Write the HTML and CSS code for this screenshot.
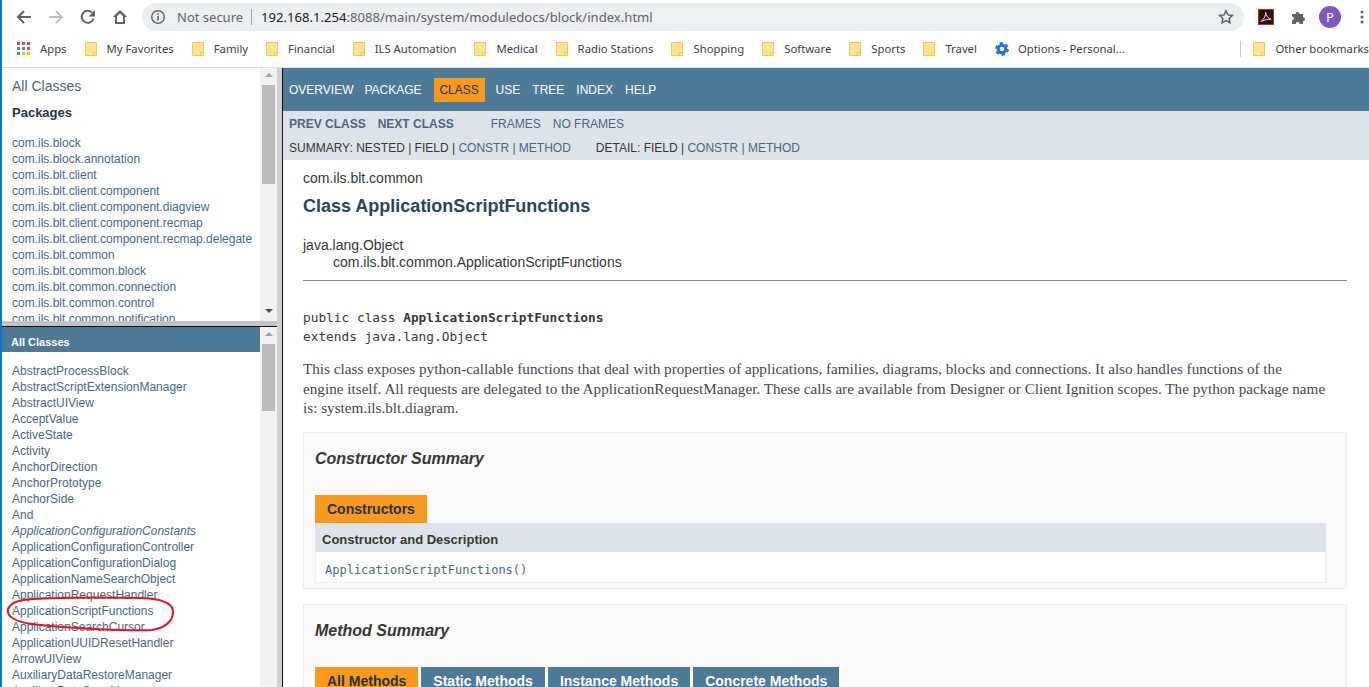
FILE: index.html
```html
<!DOCTYPE html>
<html lang="en">
<head>
<meta charset="utf-8">
<title>ApplicationScriptFunctions</title>
<link rel="stylesheet" href="styles.css">
</head>
<body>
<svg width="0" height="0" class="defs"><defs>
<symbol id="folder" viewBox="0 0 12 14"><path d="M.5.5h11v13H.5z" fill="#fee48e" stroke="#f2c94c"/><path d="M8.5 13.500v-3h3" fill="#fff3c4" stroke="#f2c94c"/></symbol>
</defs></svg>
<div class="window">
  <header class="toolbar">
    <svg class="tb-icon" width="16" height="16" viewBox="0 0 16 16"><path d="M15 8H2M8 2 2 8l6 6" fill="none" stroke="#5f6368" stroke-width="2"/></svg>
    <svg class="tb-icon" width="16" height="16" viewBox="0 0 16 16"><path d="M1 8h13M8 2l6 6-6 6" fill="none" stroke="#bdc1c6" stroke-width="2"/></svg>
    <svg class="tb-icon" width="16" height="16" viewBox="0 0 16 16"><path d="M13.500 9.500A6 6 0 1 1 12 3.600" fill="none" stroke="#5f6368" stroke-width="2"/><path d="M15 1v6.500H8.500z" fill="#5f6368"/></svg>
    <svg class="tb-icon" width="16" height="16" viewBox="0 0 16 16"><path d="M8 1 .8 8H3v7h10V8h2.200zM5 13V7.300l3-3 3 3V13z" fill="#5f6368"/></svg>
    <div class="omnibox">
      <svg width="16" height="16" viewBox="0 0 16 16"><circle cx="8" cy="8" r="6.300" fill="none" stroke="#5f6368" stroke-width="1.400"/><path d="M7.200 7h1.600v4.500H7.200zM7.200 4.300h1.600v1.600H7.200z" fill="#5f6368"/></svg>
      <span class="not-secure">Not secure</span>
      <span class="omni-sep"></span>
      <span class="url"><b>192.168.1.254</b>:8088/main/system/moduledocs/block/index.html</span>
      <svg class="star" width="16" height="16" viewBox="0 0 16 16"><path d="m8 1.800 1.900 4.100 4.500.5-3.300 3 .9 4.400L8 11.600l-4 2.200.9-4.400-3.300-3 4.500-.5z" fill="none" stroke="#5f6368" stroke-width="1.500"/></svg>
    </div>
    <svg class="ext-pdf" width="16" height="16" viewBox="0 0 16 16"><rect x=".5" y=".5" width="15" height="15" fill="#2b1010" stroke="#c5281c"/><path d="M3 12.500C6 10 8 6.500 7.600 3.500c1 3.500 2.500 6 5.500 6.800-3-.3-6 .3-10.100 2.200z" fill="none" stroke="#f3d9d5" stroke-width="1"/></svg>
    <svg class="ext-puzzle" width="16" height="16" viewBox="0 0 16 16"><path d="M1 5h3.500a2 2 0 1 1 4 0H12v3.300a2 2 0 1 1 0 4V15H8.700a2 2 0 1 0-4 0H1v-3.500a2 2 0 1 0 0-4z" fill="#5f6368"/></svg>
    <span class="avatar">P</span>
    <svg class="kebab" width="4" height="16" viewBox="0 0 4 16"><circle cx="2" cy="3" r="1.500" fill="#5f6368"/><circle cx="2" cy="8" r="1.500" fill="#5f6368"/><circle cx="2" cy="13" r="1.500" fill="#5f6368"/></svg>
  </header>
  <nav class="bookmarks">
    <span class="bm apps-bm">
      <svg width="14" height="14" viewBox="0 0 14 14"><path fill="#ea4335" d="M0 0h3v3H0zM5 0h3v3H5zM10 0h3v3h-3z"/><path fill="#34a853" d="M0 5h3v3H0z"/><path fill="#4285f4" d="M5 5h3v3H5z"/><path fill="#ea4335" d="M10 5h3v3h-3z"/><path fill="#34a853" d="M0 10h3v3H0z"/><path fill="#fbbc05" d="M5 10h3v3H5zM10 10h3v3h-3z"/></svg>
      Apps
    </span>
    <span class="bm"><svg class="fd"><use href="#folder"/></svg>My Favorites</span>
    <span class="bm"><svg class="fd"><use href="#folder"/></svg>Family</span>
    <span class="bm"><svg class="fd"><use href="#folder"/></svg>Financial</span>
    <span class="bm"><svg class="fd"><use href="#folder"/></svg>ILS Automation</span>
    <span class="bm"><svg class="fd"><use href="#folder"/></svg>Medical</span>
    <span class="bm"><svg class="fd"><use href="#folder"/></svg>Radio Stations</span>
    <span class="bm"><svg class="fd"><use href="#folder"/></svg>Shopping</span>
    <span class="bm"><svg class="fd"><use href="#folder"/></svg>Software</span>
    <span class="bm"><svg class="fd"><use href="#folder"/></svg>Sports</span>
    <span class="bm"><svg class="fd"><use href="#folder"/></svg>Travel</span>
    <span class="bm"><svg class="gear" width="14" height="14" viewBox="0 0 14 14"><circle cx="7" cy="7" r="3.800" fill="none" stroke="#1a73e8" stroke-width="3"/><circle cx="7" cy="7" r="5.900" fill="none" stroke="#1a73e8" stroke-width="2" stroke-dasharray="3.100 3.080"/></svg>Options - Personal...</span>
    <span class="bm-sep"></span>
    <span class="bm other"><svg class="fd"><use href="#folder"/></svg>Other bookmarks</span>
  </nav>
  <div class="frames">
    <aside class="side">
      <section class="pane pkg-pane">
        <div class="pane-body">
          <div class="all-link">All Classes</div>
          <div class="pkg-title">Packages</div>
          <ul class="list pkg-list">
            <li>com.ils.block</li>
            <li>com.ils.block.annotation</li>
            <li>com.ils.blt.client</li>
            <li>com.ils.blt.client.component</li>
            <li>com.ils.blt.client.component.diagview</li>
            <li>com.ils.blt.client.component.recmap</li>
            <li>com.ils.blt.client.component.recmap.delegate</li>
            <li>com.ils.blt.common</li>
            <li>com.ils.blt.common.block</li>
            <li>com.ils.blt.common.connection</li>
            <li>com.ils.blt.common.control</li>
            <li>com.ils.blt.common.notification</li>
          </ul>
        </div>
        <div class="scrollbar">
          <span class="arrow up"></span>
          <span class="thumb thumb-top"></span>
          <span class="arrow down"></span>
        </div>
      </section>
      <div class="pane-split"></div>
      <section class="pane class-pane">
        <div class="pane-body">
          <div class="all-bar">All Classes</div>
          <ul class="list class-list">
            <li>AbstractProcessBlock</li>
            <li>AbstractScriptExtensionManager</li>
            <li>AbstractUIView</li>
            <li>AcceptValue</li>
            <li>ActiveState</li>
            <li>Activity</li>
            <li>AnchorDirection</li>
            <li>AnchorPrototype</li>
            <li>AnchorSide</li>
            <li>And</li>
            <li class="iface">ApplicationConfigurationConstants</li>
            <li>ApplicationConfigurationController</li>
            <li>ApplicationConfigurationDialog</li>
            <li>ApplicationNameSearchObject</li>
            <li>ApplicationRequestHandler</li>
            <li>ApplicationScriptFunctions</li>
            <li>ApplicationSearchCursor</li>
            <li>ApplicationUUIDResetHandler</li>
            <li>ArrowUIView</li>
            <li>AuxiliaryDataRestoreManager</li>
            <li>AuxiliaryDataSaveManager</li>
          </ul>
        </div>
        <div class="scrollbar">
          <span class="arrow up"></span>
          <span class="thumb thumb-bottom"></span>
        </div>
        <svg class="circle-note" width="172" height="36" viewBox="0 0 172 36"><path d="M5 13C8 6 16 4 30 3C60 1 120 1 146 2.500C162 4 170 9 170 16C170 25 162 32 149 34C130 35 70 33 29 28C14 26 3 21 5 13" fill="none" stroke="#e8141c" stroke-width="2"/></svg>
      </section>
    </aside>
    <main class="main">
      <div class="topnav">
        <span>Overview</span><span>Package</span><span class="active">Class</span><span>Use</span><span>Tree</span><span>Index</span><span>Help</span>
      </div>
      <div class="subnav">
        <div class="sub-row">
          <b class="sub-prev">Prev Class</b><b class="sub-next">Next Class</b><span class="sub-frames">Frames</span><span class="sub-noframes">No Frames</span>
        </div>
        <div class="sub-row">
          <span class="sum"><i>Summary:&nbsp;Nested&nbsp;|&nbsp;Field&nbsp;|&nbsp;</i>Constr&nbsp;|&nbsp;Method</span>
          <span class="det"><i>Detail:&nbsp;Field&nbsp;|&nbsp;</i>Constr&nbsp;|&nbsp;Method</span>
        </div>
      </div>
      <div class="content">
        <div class="pkg-name">com.ils.blt.common</div>
        <h2 class="class-title">Class ApplicationScriptFunctions</h2>
        <div class="inherit">java.lang.Object</div>
        <div class="inherit inherit-child">com.ils.blt.common.ApplicationScriptFunctions</div>
        <hr class="rule">
        <pre class="decl">public class <b>ApplicationScriptFunctions</b>
extends java.lang.Object</pre>
        <p class="desc">This class exposes python-callable functions that deal with properties of applications, families, diagrams, blocks and connections. It also handles functions of the<br>engine itself. All requests are delegated to the ApplicationRequestManager. These calls are available from Designer or Client Ignition scopes. The python package name<br>is: system.ils.blt.diagram.</p>
        <section class="summary ctor">
          <h3 class="summary-title">Constructor Summary</h3>
          <div class="tabs"><span class="tab on">Constructors</span></div>
          <div class="col-head">Constructor and Description</div>
          <div class="row-cell">ApplicationScriptFunctions()</div>
        </section>
        <section class="summary method">
          <h3 class="summary-title">Method Summary</h3>
          <div class="tabs">
            <span class="tab on">All Methods</span>
            <span class="tab">Static Methods</span>
            <span class="tab">Instance Methods</span>
            <span class="tab">Concrete Methods</span>
          </div>
        </section>
      </div>
    </main>
  </div>
</div>
</body>
</html>
```
FILE: styles.css
```css
* { box-sizing: border-box; }
html, body { margin: 0; height: 100%; overflow: hidden; }
body { font-family: "Liberation Sans", Arial, sans-serif; background: #fff; }
.defs { position: absolute; }
.window { height: 687px; display: flex; flex-direction: column; border-left: 2px solid #0a78c8; overflow: hidden; }

.toolbar { height: 34px; flex: none; display: flex; align-items: center; padding-left: 14px; }
.tb-icon { flex: none; margin-right: 16px; }
.omnibox { width: 1102px; height: 28px; margin-left: -2px; flex: none; display: flex; align-items: center; padding: 0 10px 0 8px; background: #eceef0; border-radius: 14px; font: 14px/28px "Noto Sans", sans-serif; }
.not-secure { color: #5f6368; margin-left: 11px; font-size: 13px; }
.omni-sep { width: 1px; height: 16px; background: #9aa0a6; margin: 0 9px 0 8px; }
.url { color: #5f6368; flex: 1; font-size: 13.100px; white-space: nowrap; }
.url b { color: #202124; font-weight: 400; }
.ext-pdf { margin-left: 14px; flex: none; }
.ext-puzzle { margin-left: 17px; flex: none; }
.avatar { width: 22px; height: 22px; margin-left: 12px; flex: none; border-radius: 50%; background: #7e57c2; color: #fff; font: 13px/22px "Noto Sans", sans-serif; text-align: center; }
.kebab { margin-left: 19px; flex: none; }

.bookmarks { height: 34px; flex: none; display: flex; align-items: center; gap: 18px; padding: 0 0 3px 15px; font: 11.300px/16px "Noto Sans", sans-serif; color: #3c4043; border-bottom: 1px solid #dadce0; white-space: nowrap; }
.bm { display: flex; align-items: center; }
.bm svg { flex: none; }
.apps-bm svg { margin-right: 9px; }
.fd { width: 12px; height: 14px; margin-right: 10px; }
.gear { margin-right: 9px; }
.bm-sep { width: 1px; height: 16px; background: #c8cacc; margin-left: auto; margin-right: -6px; }

.frames { flex: 1; display: flex; min-height: 0; }
.side { width: 280px; flex: none; display: flex; flex-direction: column; background: #ccc; border-right: 5px solid #d0d0d0; }
.pane { display: flex; position: relative; overflow: hidden; background: #fff; }
.pkg-pane { height: 253px; flex: none; }
.class-pane { flex: 1; min-height: 0; }
.pane-split { height: 6px; flex: none; background: #c4c4c4; border-bottom: 1px solid #111; }
.pane-body { flex: 1; min-width: 0; overflow: hidden; }
.scrollbar { width: 17px; flex: none; background: #f1f1f1; display: flex; flex-direction: column; align-items: center; position: relative; }
.arrow { width: 0; height: 0; border-left: 4px solid transparent; border-right: 4px solid transparent; flex: none; }
.arrow.up { border-bottom: 4px solid #a3a3a3; margin-top: 5px; }
.arrow.down { border-top: 4px solid #505050; margin-top: auto; margin-bottom: 8px; }
.thumb { width: 13px; background: #bcbcbc; flex: none; }
.thumb-top { height: 99px; margin-top: 8px; }
.thumb-bottom { height: 67px; margin-top: 8px; }

.all-link { padding: 10px 0 0 10px; font-size: 14px; line-height: 16px; color: #4a6782; }
.pkg-title { padding: 11px 0 0 10px; font-size: 13px; line-height: 16px; font-weight: 700; color: #253441; }
.list { list-style: none; margin: 0; padding: 0 0 0 10px; font-size: 12px; line-height: 16px; color: #4a6782; white-space: nowrap; }
.pkg-list { margin-top: 14px; }
.all-bar { height: 25px; padding-left: 9px; background: #4d7a97; color: #fff; font-size: 11px; line-height: 30px; font-weight: 700; }
.class-list { margin-top: 11px; }
.iface { font-style: italic; }
.circle-note { position: absolute; left: 1px; top: 269px; }

.main { flex: 1; min-width: 0; border-left: 1px solid #111; overflow: hidden; display: flex; flex-direction: column; }
.topnav { height: 43px; flex: none; display: flex; align-items: center; padding-left: 6px; background: #4d7a97; color: #fff; font-size: 12px; text-transform: uppercase; }
.topnav span { margin-right: 12px; white-space: nowrap; }
.topnav span:first-child { margin-right: 11px; }
.topnav .active { width: 51px; text-align: center; background: #f8981d; color: #253441; padding: 5px 0; margin-right: 11px; line-height: 14px; }
.subnav { height: 49px; flex: none; background: #dee3e9; color: #4a6782; font-size: 12px; text-transform: uppercase; padding: 6px 0 0 6px; }
.sub-row { height: 24px; line-height: 14px; display: flex; white-space: nowrap; }
.sub-row b { font-weight: 700; }
.sub-next { margin-left: 12px; }
.sub-frames { margin-left: 37px; }
.sub-noframes { margin-left: 12px; }
.sum i, .det i { font-style: normal; color: #353833; }
.det { margin-left: 25px; }

.content { padding: 0 22px 0 20px; flex: 1; min-height: 0; overflow: hidden; color: #353833; }
.pkg-name { font-size: 14px; line-height: 16px; margin-top: 10px; }
.class-title { margin: 9px 0 0; font-size: 18px; line-height: 22px; font-weight: 700; color: #2c4557; }
.inherit { font-size: 14px; line-height: 17px; }
.class-title + .inherit { margin-top: 20px; }
.inherit-child { padding-left: 30px; }
.rule { margin: 9px 0 0; border: 0; border-top: 1px solid #888; }
.decl { margin: 27px 0 0; font: 12.800px/19px "DejaVu Sans Mono", monospace; }
.decl b { font-weight: 700; }
.desc { margin: 13px 0 0; font: 15.200px/19.500px "Liberation Serif", serif; color: #474747; white-space: nowrap; }
.summary { margin-top: 14px; background: #f9f9f9; border: 1px solid #ededed; padding: 0 20px 5px 11px; }
.summary + .summary { margin-top: 15px; }
.summary-title { margin: 16px 0 0; font-size: 16px; line-height: 20px; font-style: italic; font-weight: 700; color: #353833; }
.tabs { display: flex; margin-top: 26px; }
.tab { height: 28px; padding: 0 12px; margin-right: 3px; background: #4d7a97; color: #fff; font-size: 14px; line-height: 28px; font-weight: 700; white-space: nowrap; }
.tab.on { background: #f8981d; color: #253441; }
.col-head { height: 29px; padding-left: 7px; background: #dee3e9; color: #353833; font-size: 13px; line-height: 33px; font-weight: 700; }
.row-cell { height: 31px; padding-left: 9px; background: #fff; color: #4a6782; border: solid #ededed; border-width: 0 1px 1px; font: 12px/36px "DejaVu Sans Mono", monospace; }
```
